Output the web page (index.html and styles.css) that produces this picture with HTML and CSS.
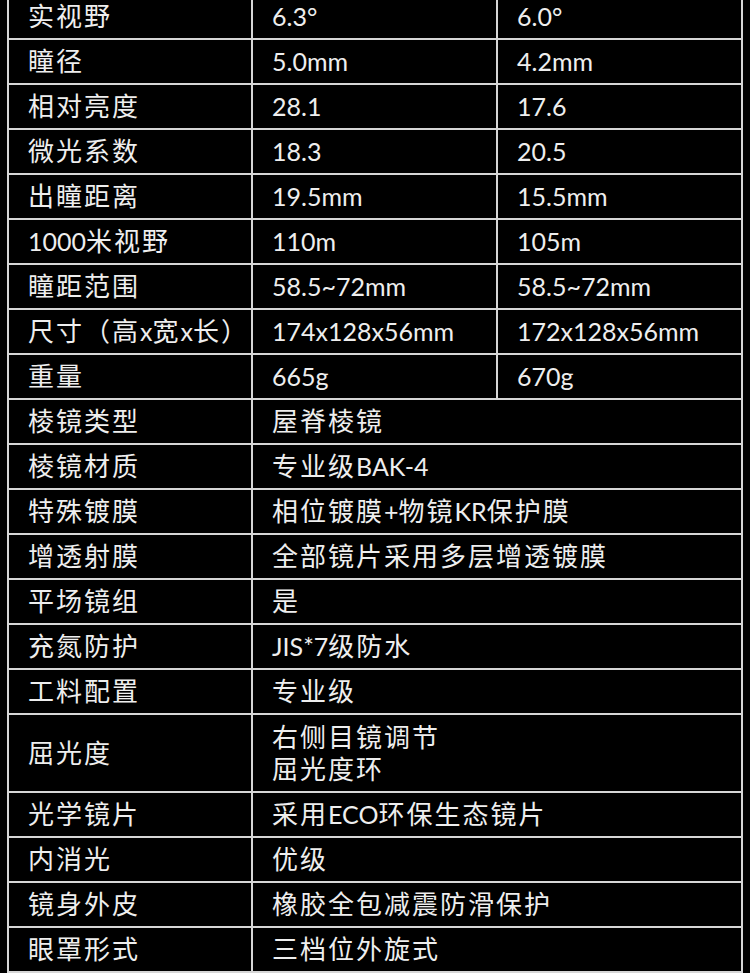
FILE: index.html
```html
<!DOCTYPE html>
<html lang="zh-CN">
<head>
<meta charset="utf-8">
<title>参数表</title>
<link rel="stylesheet" href="styles.css">
</head>
<body>
<div class="sheet">
  <div class="cell">实视野</div><div class="cell num">6.3°</div><div class="cell num">6.0°</div>
  <div class="cell">瞳径</div><div class="cell num">5.0mm</div><div class="cell num">4.2mm</div>
  <div class="cell">相对亮度</div><div class="cell num">28.1</div><div class="cell num">17.6</div>
  <div class="cell">微光系数</div><div class="cell num">18.3</div><div class="cell num">20.5</div>
  <div class="cell">出瞳距离</div><div class="cell num">19.5mm</div><div class="cell num">15.5mm</div>
  <div class="cell"><span class="lat">1000</span>米视野</div><div class="cell num">110m</div><div class="cell num">105m</div>
  <div class="cell">瞳距范围</div><div class="cell num">58.5~72mm</div><div class="cell num">58.5~72mm</div>
  <div class="cell">尺寸（高<span class="lat">x</span>宽<span class="lat">x</span>长）</div><div class="cell num">174x128x56mm</div><div class="cell num">172x128x56mm</div>
  <div class="cell">重量</div><div class="cell num">665g</div><div class="cell num">670g</div>
  <div class="cell">棱镜类型</div><div class="cell wide">屋脊棱镜</div>
  <div class="cell">棱镜材质</div><div class="cell wide">专业级<span class="lat">BAK-4</span></div>
  <div class="cell">特殊镀膜</div><div class="cell wide">相位镀膜<span class="lat">+</span>物镜<span class="lat">KR</span>保护膜</div>
  <div class="cell">增透射膜</div><div class="cell wide">全部镜片采用多层增透镀膜</div>
  <div class="cell">平场镜组</div><div class="cell wide">是</div>
  <div class="cell">充氮防护</div><div class="cell wide"><span class="lat">JIS*7</span>级防水</div>
  <div class="cell">工料配置</div><div class="cell wide">专业级</div>
  <div class="cell tall">屈光度</div><div class="cell wide tall two">右侧目镜调节<br>屈光度环</div>
  <div class="cell">光学镜片</div><div class="cell wide">采用<span class="lat">ECO</span>环保生态镜片</div>
  <div class="cell">内消光</div><div class="cell wide">优级</div>
  <div class="cell">镜身外皮</div><div class="cell wide">橡胶全包减震防滑保护</div>
  <div class="cell">眼罩形式</div><div class="cell wide">三档位外旋式</div>
</div>
</body>
</html>
```
FILE: styles.css
```css
html, body {
  margin: 0;
  padding: 0;
  background: #000;
}

.sheet {
  margin: -7px 0 0 7px;
  width: 736px;
  display: grid;
  grid-template-columns: 242px 243px 243px;
  grid-auto-rows: minmax(43px, auto);
  gap: 2px;
  padding: 2px;
  box-sizing: border-box;
  background: #d6d6d6;
  font-family: "Lato", "Noto Sans CJK SC", sans-serif;
  font-size: 26px;
  color: #eeeeee;
}

.cell {
  background: #000;
  padding: 0 0 0 19px;
  letter-spacing: 2px;
  white-space: nowrap;
  line-height: 43px;
}

.cell .lat,
.num {
  letter-spacing: 0;
  font-size: 25px;
}

.cell.wide {
  grid-column: span 2;
}

.cell.tall {
  height: 76px;
  line-height: 76px;
}

.cell.two {
  line-height: 32px;
  padding-top: 6px;
  box-sizing: border-box;
}
```
